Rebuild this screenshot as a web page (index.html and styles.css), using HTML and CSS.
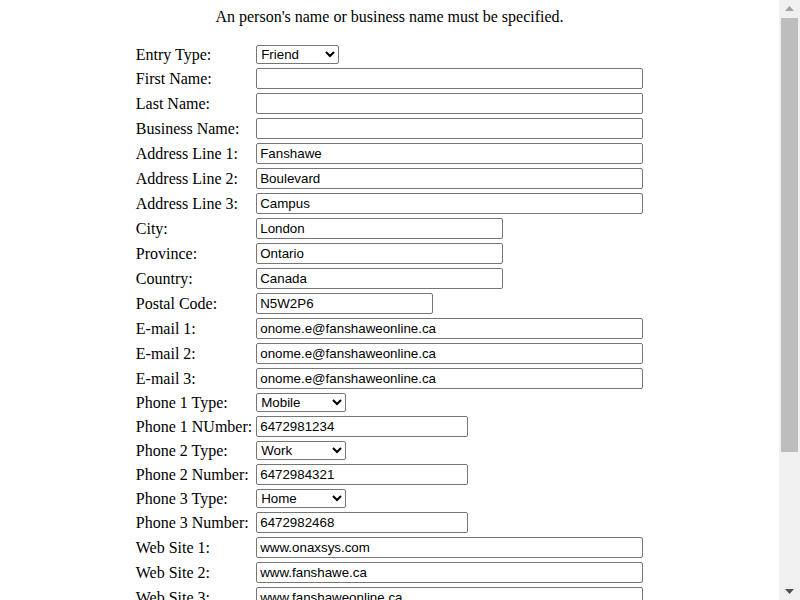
FILE: index.html
```html
<!DOCTYPE html>
<html>
<head>
<meta charset="utf-8">
<title>Address Book Entry</title>
<link rel="stylesheet" href="styles.css">
</head>
<body>
<p class="notice">An person's name or business name must be specified.</p>
<form class="entry-form">
<table class="form-table">
<tr><td class="label">Entry Type:</td><td><select class="sel sel-entry"><option>Friend</option><option>Family</option><option>Business</option></select></td></tr>
<tr><td class="label">First Name:</td><td><input class="txt txt-wide" type="text" value=""></td></tr>
<tr><td class="label">Last Name:</td><td><input class="txt txt-wide" type="text" value=""></td></tr>
<tr><td class="label">Business Name:</td><td><input class="txt txt-wide" type="text" value=""></td></tr>
<tr><td class="label">Address Line 1:</td><td><input class="txt txt-wide" type="text" value="Fanshawe"></td></tr>
<tr><td class="label">Address Line 2:</td><td><input class="txt txt-wide" type="text" value="Boulevard"></td></tr>
<tr><td class="label">Address Line 3:</td><td><input class="txt txt-wide" type="text" value="Campus"></td></tr>
<tr><td class="label">City:</td><td><input class="txt txt-mid" type="text" value="London"></td></tr>
<tr><td class="label">Province:</td><td><input class="txt txt-mid" type="text" value="Ontario"></td></tr>
<tr><td class="label">Country:</td><td><input class="txt txt-mid" type="text" value="Canada"></td></tr>
<tr><td class="label">Postal Code:</td><td><input class="txt txt-postal" type="text" value="N5W2P6"></td></tr>
<tr><td class="label">E-mail 1:</td><td><input class="txt txt-wide" type="text" value="onome.e@fanshaweonline.ca"></td></tr>
<tr><td class="label">E-mail 2:</td><td><input class="txt txt-wide" type="text" value="onome.e@fanshaweonline.ca"></td></tr>
<tr><td class="label">E-mail 3:</td><td><input class="txt txt-wide" type="text" value="onome.e@fanshaweonline.ca"></td></tr>
<tr><td class="label">Phone 1 Type:</td><td><select class="sel sel-phone"><option>Mobile</option><option>Work</option><option>Home</option></select></td></tr>
<tr><td class="label">Phone 1 NUmber:</td><td><input class="txt txt-phone" type="text" value="6472981234"></td></tr>
<tr><td class="label">Phone 2 Type:</td><td><select class="sel sel-phone"><option>Work</option><option>Mobile</option><option>Home</option></select></td></tr>
<tr><td class="label">Phone 2 Number:</td><td><input class="txt txt-phone" type="text" value="6472984321"></td></tr>
<tr><td class="label">Phone 3 Type:</td><td><select class="sel sel-phone"><option>Home</option><option>Mobile</option><option>Work</option></select></td></tr>
<tr><td class="label">Phone 3 Number:</td><td><input class="txt txt-phone" type="text" value="6472982468"></td></tr>
<tr><td class="label">Web Site 1:</td><td><input class="txt txt-wide" type="text" value="www.onaxsys.com"></td></tr>
<tr><td class="label">Web Site 2:</td><td><input class="txt txt-wide" type="text" value="www.fanshawe.ca"></td></tr>
<tr><td class="label">Web Site 3:</td><td><input class="txt txt-wide" type="text" value="www.fanshaweonline.ca"></td></tr>
<tr><td class="label">Notes:</td><td><textarea class="notes" rows="4"></textarea></td></tr>
<tr><td></td><td class="actions"><input class="btn" type="submit" value="Save"> <input class="btn" type="reset" value="Clear"></td></tr>
</table>
</form>
<div class="scrollbar" aria-hidden="true">
  <div class="sb-btn"><svg width="9" height="5" viewBox="0 0 9 5"><path d="M4.5 0 L9 5 L0 5 Z" fill="#a3a3a3"/></svg></div>
  <div class="sb-track"><div class="sb-thumb"></div></div>
  <div class="sb-btn"><svg width="9" height="5" viewBox="0 0 9 5"><path d="M0 0 L9 0 L4.5 5 Z" fill="#505050"/></svg></div>
</div>
</body>
</html>
```
FILE: styles.css
```css
html {
  background: #ffffff;
}
body {
  margin: 8px 29px 8px 8px;
  font-family: "Liberation Serif", "Times New Roman", serif;
  font-size: 16px;
  color: #000000;
}
.notice {
  text-align: center;
  margin: 0 0 16px 0;
}
.entry-form {
  margin: 0;
}
.form-table {
  margin: 0 auto;
  border-collapse: separate;
  border-spacing: 2px;
}
.form-table td {
  padding: 1px;
  vertical-align: middle;
}
.label {
  white-space: nowrap;
}
.txt {
  box-sizing: border-box;
  height: 21px;
  font-family: "Liberation Sans", Arial, sans-serif;
  font-size: 13.333px;
  padding: 1px 3px;
  border: 1px solid #767676;
  border-radius: 2px;
  margin: 0;
  color: #000;
  background: #fff;
  display: block;
}
.txt-wide { width: 387px; }
.txt-mid { width: 247px; }
.txt-postal { width: 177px; }
.txt-phone { width: 212px; }
.sel {
  box-sizing: border-box;
  height: 19px;
  font-family: "Liberation Sans", Arial, sans-serif;
  font-size: 13.333px;
  border: 1px solid #767676;
  border-radius: 2px;
  margin: 0;
  color: #000;
  background: #fff;
  display: block;
}
.sel-entry { width: 83px; }
.sel-phone { width: 90px; }
.notes {
  box-sizing: border-box;
  width: 387px;
  height: 70px;
  font-family: "Liberation Mono", monospace;
  font-size: 13.333px;
  border: 1px solid #767676;
  border-radius: 2px;
  margin: 0;
  display: block;
}
.actions {
  padding-top: 8px;
}
.btn {
  font-family: "Liberation Sans", Arial, sans-serif;
  font-size: 13.333px;
}
.scrollbar {
  position: fixed;
  top: 0;
  right: 0;
  bottom: 0;
  width: 21px;
  background: #f0f0f0;
  display: flex;
  flex-direction: column;
}
.sb-btn {
  height: 17px;
  flex: 0 0 17px;
  display: flex;
  align-items: center;
  justify-content: center;
}
.sb-track {
  flex: 1;
  padding: 1px 2px 0 2px;
}
.sb-thumb {
  height: 434px;
  background: #bdbdbd;
}
```
